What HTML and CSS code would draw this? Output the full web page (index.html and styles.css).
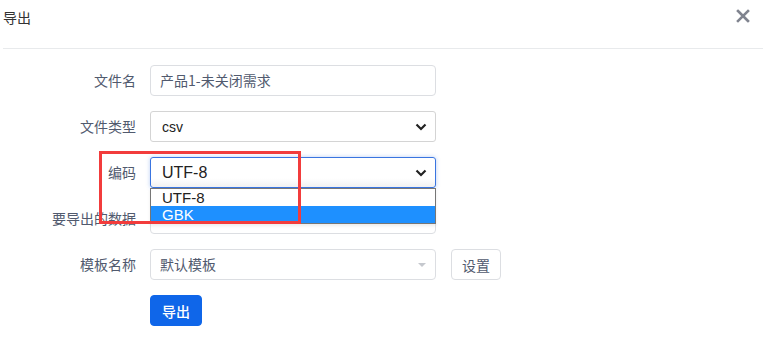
FILE: index.html
```html
<!DOCTYPE html>
<html lang="zh-CN">
  <head>
    <meta charset="UTF-8" />
    <title>导出</title>
    <link rel="stylesheet" href="styles.css">
  </head>
  <body>
    <div class="modal">
      <!-- Header -->
      <div class="modal-header">
        <span class="modal-title">导出</span>
        <span class="modal-close">
          <svg width="14" height="14" viewBox="0 0 14 14">
            <path d="M2 2 L12 12 M12 2 L2 12" stroke="#80848f" stroke-width="2.6" stroke-linecap="square" fill="none" />
          </svg>
        </span>
      </div>

      <!-- Body -->
      <div class="modal-body">
        <div class="form-row">
          <label class="form-label">文件名</label>
          <div class="form-control">
            <div class="input">产品1-未关闭需求</div>
          </div>
        </div>

        <div class="form-row">
          <label class="form-label">文件类型</label>
          <div class="form-control">
            <div class="native-select">
              <span class="small-text">csv</span>
              <svg class="chevron" width="12" height="8" viewBox="0 0 12 8">
                <path d="M1.5 1.5 L6 6 L10.5 1.5" stroke="#222" stroke-width="2.2" fill="none" />
              </svg>
            </div>
          </div>
        </div>

        <div class="form-row">
          <label class="form-label">编码</label>
          <div class="form-control">
            <div class="native-select focused">
              <span class="big-text">UTF-8</span>
              <svg class="chevron" width="12" height="8" viewBox="0 0 12 8">
                <path d="M1.5 1.5 L6 6 L10.5 1.5" stroke="#222" stroke-width="2.2" fill="none" />
              </svg>
            </div>
            <div class="dropdown">
              <div class="option">UTF-8</div>
              <div class="option selected">GBK</div>
            </div>
          </div>
          <div class="highlight-box"></div>
        </div>

        <div class="form-row">
          <label class="form-label">要导出的数据</label>
          <div class="form-control">
            <div class="input"></div>
          </div>
        </div>

        <div class="form-row">
          <label class="form-label">模板名称</label>
          <div class="form-control">
            <div class="input select">
              <span>默认模板</span>
              <span class="caret"></span>
            </div>
          </div>
          <button class="btn">设置</button>
        </div>

        <div class="form-row">
          <div class="form-label"></div>
          <button class="btn btn-primary">导出</button>
        </div>
      </div>
    </div>
  </body>
</html>
```

FILE: styles.css
```css
/* General */
body {
  margin: 0;
  background: #fff;
  font-family: "Noto Sans CJK SC", "Noto Sans", sans-serif;
  font-size: 14px;
  color: #515a6e;
}

.modal {
  width: 760px;
  padding-left: 3px;
}

/* Header */
.modal-header {
  height: 48px;
  border-bottom: 1px solid #e8eaec;
  display: flex;
  justify-content: space-between;
  align-items: flex-start;
}

.modal-title {
  margin-top: 6px;
  line-height: 22px;
  font-size: 14px;
  color: #333;
}

.modal-close {
  margin-top: 7px;
  margin-right: 13px;
  height: 14px;
}

/* Form */
.modal-body {
  padding-top: 16px;
  display: flex;
  flex-direction: column;
  gap: 15px;
}

.form-row {
  position: relative;
  display: flex;
  align-items: center;
  height: 31px;
  margin-left: -3px;
}

.form-label {
  width: 136px;
  padding-right: 14px;
  text-align: right;
  line-height: 31px;
  color: #515a6e;
}

.form-control {
  position: relative;
  width: 286px;
}

.input {
  box-sizing: border-box;
  height: 31px;
  border: 1px solid #dcdee2;
  border-radius: 4px;
  padding: 0 9px;
  line-height: 29px;
  color: #515a6e;
}

.input.select {
  display: flex;
  justify-content: space-between;
  align-items: center;
}

.caret {
  width: 0;
  height: 0;
  border-left: 4px solid transparent;
  border-right: 4px solid transparent;
  border-top: 4px solid #c5c8ce;
}

.native-select {
  box-sizing: border-box;
  height: 31px;
  border: 1px solid #d4d4d4;
  border-radius: 3px;
  padding: 0 8px 0 11px;
  display: flex;
  align-items: center;
  justify-content: space-between;
  color: #222;
  font-family: "Liberation Sans", Arial, sans-serif;
}

.native-select.focused {
  border-color: #3a75e0;
  box-shadow: 0 0 4px rgba(58, 117, 224, 0.35);
  background: linear-gradient(#fff 70%, #f1f1f1);
}

.small-text {
  font-size: 14px;
}

.big-text {
  font-size: 16px;
}

.chevron {
  display: block;
}

/* Open list of the encoding select */
.dropdown {
  position: absolute;
  top: 31px;
  left: 0;
  width: 286px;
  box-sizing: border-box;
  border: 1px solid #767676;
  background: #fff;
  z-index: 5;
  font-family: "Liberation Sans", Arial, sans-serif;
  font-size: 15px;
  color: #222;
  box-shadow: 0 2px 3px rgba(0, 0, 0, 0.08);
}

.option {
  height: 17px;
  line-height: 17px;
  padding-left: 11px;
}

.option.selected {
  background: #1e90ff;
  color: #fff;
}

/* Red annotation frame */
.highlight-box {
  position: absolute;
  top: -6px;
  left: 99px;
  width: 196px;
  height: 67px;
  border: 3px solid #f23c3c;
  z-index: 6;
}

/* Buttons */
.btn {
  margin-left: 15px;
  width: 50px;
  height: 31px;
  padding: 0;
  border: 1px solid #dcdee2;
  border-radius: 4px;
  background: #fff;
  font-family: inherit;
  font-size: 14px;
  color: #515a6e;
}

.btn-primary {
  margin-left: 0;
  width: 52px;
  border-color: #0f66e9;
  background: #0f66e9;
  color: #fff;
  font-weight: 500;
}
```
